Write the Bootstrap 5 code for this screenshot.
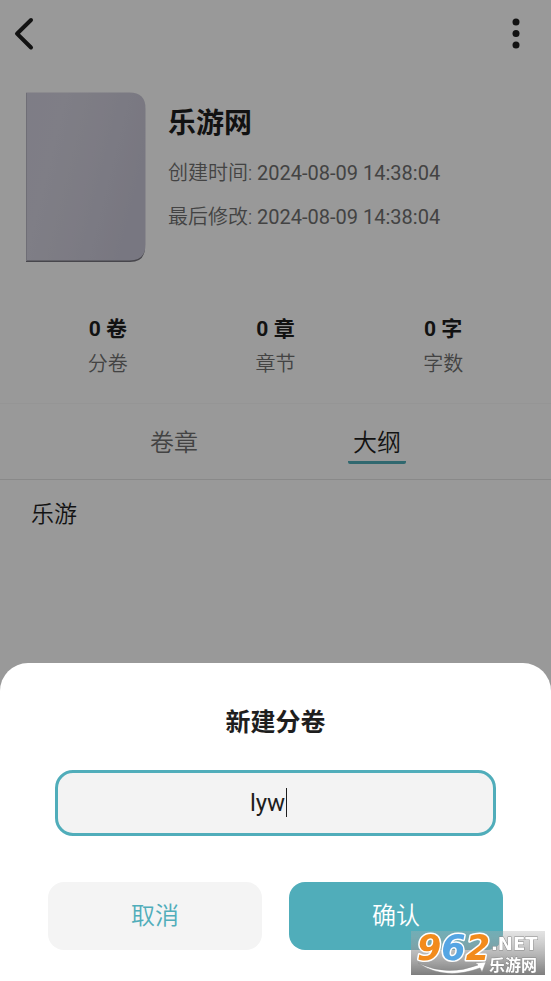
<!DOCTYPE html>
<html lang="zh-CN">
<head>
<meta charset="utf-8">
<meta name="viewport" content="width=device-width, initial-scale=1">
<title>乐游网</title>
<link href="https://cdn.jsdelivr.net/npm/bootstrap@5.3.0/dist/css/bootstrap.min.css" rel="stylesheet">
<style>
  :root { --teal: #50adba; --ink: #1e1e1e; --muted: #707070; }
  body { font-family: Roboto, "Noto Sans CJK SC", sans-serif; color: var(--ink); background: #fff; }
  .topbar { padding: 10px 0 10px 8px; }
  .icon-button { width: 48px; height: 48px; padding: 0; border: 0; }
  .back-button { width: 32px; }
  .book { padding: 24px 24px 50px; gap: 22px; }
  .cover { width: 122px; height: 171px; flex: none; }
  .book-title { font-size: 28px; line-height: 40px; margin: 12px 0 15px; }
  .book-meta { font-size: 20px; line-height: 28px; color: var(--muted); margin: 0 0 16px; }
  .stats { padding: 0 24px 22px; }
  .stat-value { font-size: 21px; line-height: 32px; font-weight: 700; }
  .stat-label { font-size: 20px; line-height: 30px; margin-top: 4px; margin-bottom: 2px; color: var(--muted); }
  .tabs { gap: 145px; padding: 22px 0 15px; border-top: 1px solid #f9f9f9; border-bottom: 1px solid #e4e4e4; }
  .tab-link { width: 58px; font-size: 24px; line-height: 35px; color: var(--muted); border-bottom: 3px solid transparent; border-radius: 2px; text-align: center; text-decoration: none; }
  .tab-link.active { color: var(--ink); border-color: var(--teal); }
  .outline-link { display: block; padding: 18px 31px; font-size: 23px; line-height: 34px; color: var(--ink); text-decoration: none; }
  .book-meta, .stat-label, .tab-link, .outline-link, .action { font-weight: 350; }
  .scrim { background: rgba(0, 0, 0, .4); }
  .sheet { border-radius: 28px 28px 0 0; padding: 42px 48px 31px; z-index: 1050; background: #fff; }
  .sheet-title { font-size: 25px; line-height: 36px; margin-bottom: 29px; }
  .field { margin: 0 7px 46px; }
  .name-input { height: 66px; padding: 0 16px 0 0; font-size: 24px; color: var(--ink); border: 3px solid var(--teal); border-radius: 18px; background: #f3f3f3; caret-color: transparent; text-align: center; }
  .name-input:focus { border-color: var(--teal); background: #f3f3f3; box-shadow: none; }
  .cursor { position: absolute; left: calc(50% + 10px); top: 18px; width: 1px; height: 29px; background: var(--ink); }
  .actions { gap: 27px; }
  .action { height: 68px; flex: 1; border: 0; border-radius: 16px; font-size: 24px; line-height: 36px; }
  .action-cancel, .action-cancel:hover { background: #f4f4f4; color: var(--teal); }
  .action-ok, .action-ok:hover { background: var(--teal); color: #fff; }
  .stamp { position: absolute; right: 6px; bottom: 6px; width: 134px; height: 44px; overflow: visible; }
</style>
<script defer src="https://cdn.jsdelivr.net/npm/bootstrap@5.3.0/dist/js/bootstrap.bundle.min.js"></script>
</head>
<body>
<header class="topbar d-flex justify-content-between align-items-center">
  <button class="btn icon-button back-button" type="button" aria-label="返回">
    <svg class="d-block mx-auto" width="32" height="48" viewBox="0 0 32 48" fill="none" stroke="#1e1e1e" stroke-width="4" stroke-linecap="round" stroke-linejoin="round"><path d="M23 10 9 23.700 23 37.500"/></svg>
  </button>
  <button class="btn icon-button me-2 pe-0" type="button" aria-label="更多">
    <svg class="d-block" width="48" height="48" viewBox="0 0 48 48" fill="#1e1e1e"><circle cx="21" cy="12" r="3.5"/><circle cx="21" cy="23.5" r="3.5"/><circle cx="21" cy="35" r="3.5"/></svg>
  </button>
</header>
<main>
  <section class="book d-flex">
    <svg class="cover" viewBox="0 0 122 171" aria-hidden="true">
      <defs><linearGradient id="paper" x1="0" y1="0" x2="1" y2=".35"><stop offset="0" stop-color="#d3d0df"/><stop offset=".3" stop-color="#d4d2df"/><stop offset=".6" stop-color="#d0cedc"/><stop offset="1" stop-color="#c9c7d7"/></linearGradient></defs>
      <path d="M2 140h119v15q0 15-15 15H2z" fill="#77767f"/>
      <path d="M2 .5h103.500q16 0 16 16v136q0 16-16 16H2z" fill="url(#paper)"/>
      <path d="M2.500 1v168" stroke="#b9b7c5" stroke-width="1"/>
    </svg>
    <div>
      <h1 class="book-title fw-bold">乐游网</h1>
      <p class="book-meta">创建时间: <time class="fw-normal" datetime="2024-08-09T14:38:04">2024-08-09 14:38:04</time></p>
      <p class="book-meta mb-0">最后修改: <time class="fw-normal" datetime="2024-08-09T14:38:04">2024-08-09 14:38:04</time></p>
    </div>
  </section>
  <section class="stats">
    <div class="row g-0 text-center">
      <div class="col"><div class="stat-value">0 卷</div><div class="stat-label">分卷</div></div>
      <div class="col"><div class="stat-value">0 章</div><div class="stat-label">章节</div></div>
      <div class="col"><div class="stat-value">0 字</div><div class="stat-label">字数</div></div>
    </div>
  </section>
  <nav class="tabs d-flex justify-content-center">
    <a class="tab-link" href="#volumes">卷章</a>
    <a class="tab-link active" href="#outline" aria-current="page">大纲</a>
  </nav>
  <a class="outline-link" href="#item">乐游</a>
</main>
<div class="scrim position-fixed top-0 start-0 w-100 h-100"></div>
<form class="sheet fixed-bottom" role="dialog" aria-labelledby="sheet-title">
  <h2 class="sheet-title text-center fw-bold" id="sheet-title"><label for="volume-name">新建分卷</label></h2>
  <div class="field position-relative">
    <input class="name-input form-control" id="volume-name" type="text" value="lyw" autocomplete="off" spellcheck="false">
    <span class="cursor"></span>
  </div>
  <div class="actions d-flex">
    <button class="action action-cancel btn" type="button">取消</button>
    <button class="action action-ok btn" type="button">确认</button>
  </div>
  <svg class="stamp" viewBox="0 0 134 44" role="img" aria-label="962.NET 乐游网">
    <defs><linearGradient id="haze" x1="0" y1="0" x2="0" y2="1"><stop offset="0" stop-color="#b0b0b0" stop-opacity=".35"/><stop offset="1" stop-color="#777" stop-opacity=".95"/></linearGradient></defs>
    <rect width="134" height="44" fill="url(#haze)"/>
    <path d="M7 32q29 14 60 2l-3-2 11-1-4 10-2-4q-35 13-62-5z" fill="#fff" stroke="#888" stroke-width=".5"/>
    <g font-weight="700" paint-order="stroke" stroke-linejoin="round">
      <text x="6" y="29" font-family="DejaVu Sans, sans-serif" font-size="35" font-style="italic" stroke="#fff" stroke-width="3" fill="#f28b1c">9<tspan fill="#55a5e3">6</tspan>2</text>
      <text x="80" y="19" font-family="DejaVu Sans, sans-serif" font-size="18" fill="#fff" stroke="#888" stroke-width="1">.NET</text>
      <text x="78" y="40" font-size="16" font-family="Noto Sans CJK SC, sans-serif" fill="#fff" stroke="#888" stroke-width="1">乐游网</text>
    </g>
  </svg>
</form>
</body>
</html>
